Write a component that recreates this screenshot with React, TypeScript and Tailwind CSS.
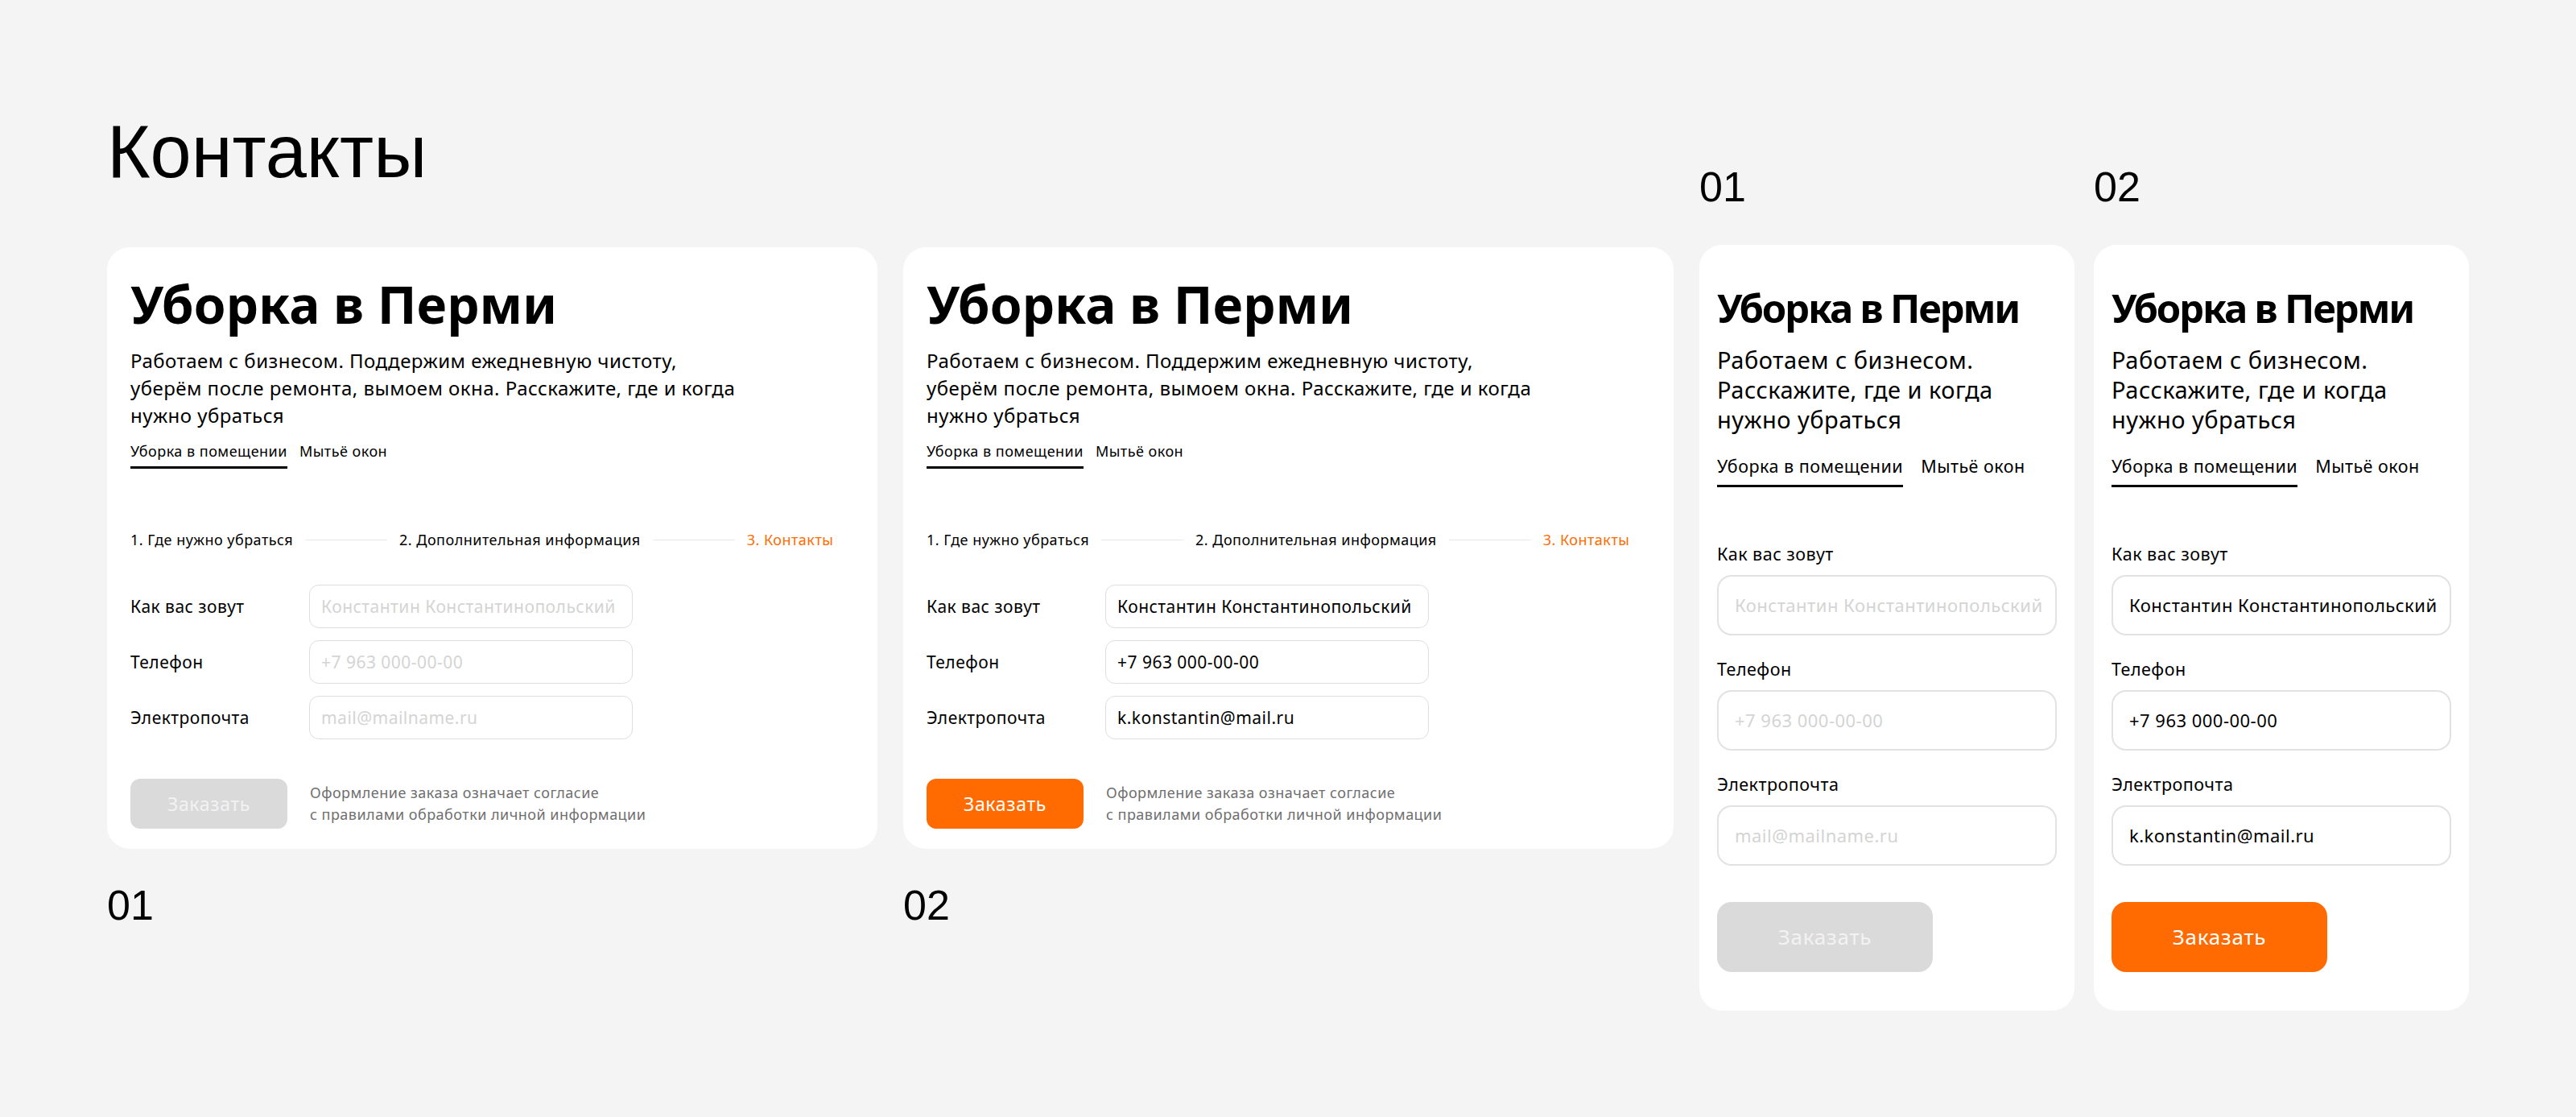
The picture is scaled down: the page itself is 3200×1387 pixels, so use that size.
const sans = "font-['Noto_Sans',sans-serif]";

interface VariantProps {
  filled: boolean;
}

const fields = [
  { label: "Как вас зовут", value: "Константин Константинопольский" },
  { label: "Телефон", value: "+7 963 000-00-00" },
  { label: "Электропочта", value: "k.konstantin@mail.ru", placeholder: "mail@mailname.ru" },
];

const DesktopCard = ({ filled }: VariantProps) => {
  return (
    <div className={`w-[957px] h-[747px] rounded-[28px] bg-white px-[29px] pt-[36px] text-black ${sans}`}>
      <h2 className="text-[64px] leading-[1.1] font-bold">Уборка в Перми</h2>
      <div className="tracking-[0.03em]">
        <p className="mt-[18px] text-[24px] leading-[34px]">
          Работаем с бизнесом. Поддержим ежедневную чистоту,
          <br />
          уберём после ремонта, вымоем окна. Расскажите, где и когда
          <br />
          нужно убраться
        </p>
        <div className="mt-[15px] flex items-start gap-[15px] text-[18px] leading-[24px]">
          <span className="border-b-[3px] border-black pb-[7px]">Уборка в помещении</span>
          <span>Мытьё окон</span>
        </div>

        <div className="mt-[76px] flex items-center gap-[15px] text-[18px] leading-[24px]">
          <span>1. Где нужно убраться</span>
          <span className="h-px w-[102px] bg-[#e8e8e8]" />
          <span>2. Дополнительная информация</span>
          <span className="h-px w-[102px] bg-[#e8e8e8]" />
          <span className="text-[#ff6b00]">3. Контакты</span>
        </div>

        <div className="mt-[44px] flex flex-col gap-[15px]">
          {fields.map((f) => (
            <div key={f.label} className="flex items-center">
              <span className="w-[222px] text-[21px] leading-[28px]">{f.label}</span>
              <div
                className={`flex h-[54px] w-[402px] items-center overflow-hidden whitespace-nowrap rounded-[12px] border border-[#dedede] px-[14px] text-[21px] ${
                  filled ? "text-black" : "text-[#d4d4d4]"
                }`}
              >
                {filled ? f.value : f.placeholder ?? f.value}
              </div>
            </div>
          ))}
        </div>

        <div className="mt-[49px] flex items-center">
          <button
            className={`h-[62px] w-[195px] rounded-[12px] text-[23px] tracking-[0.03em] ${
              filled ? "bg-[#ff6b00] text-white" : "bg-[#dadada] text-[#f2f2f2]"
            }`}
          >
            Заказать
          </button>
          <p className="ml-[28px] text-[18px] leading-[27px] text-[#6f6f6f]">
            Оформление заказа означает согласие
            <br />с правилами обработки личной информации
          </p>
        </div>
      </div>
    </div>
  );
};

const MobileCard = ({ filled }: VariantProps) => {
  return (
    <div className={`w-[466px] rounded-[28px] bg-white px-[22px] pt-[52px] pb-[48px] text-black ${sans}`}>
      <h2 className="text-[49px] leading-[1.1] font-bold tracking-[-0.045em]">Уборка в Перми</h2>
      <div className="tracking-[0.03em]">
        <p className="mt-[18px] text-[29px] leading-[37px]">
          Работаем с бизнесом.
          <br />
          Расскажите, где и когда
          <br />
          нужно убраться
        </p>
        <div className="mt-[26px] flex items-start gap-[22px] text-[21.5px] leading-[28px]">
          <span className="border-b-[3px] border-black pb-[9px]">Уборка в помещении</span>
          <span>Мытьё окон</span>
        </div>

        <div className="mt-[69px] flex flex-col gap-[28px]">
          {fields.map((f) => (
            <div key={f.label}>
              <div className="text-[21.5px] leading-[28px]">{f.label}</div>
              <div
                className={`mt-[12px] flex h-[75px] w-full items-center overflow-hidden whitespace-nowrap rounded-[18px] border-2 border-[#e2e2e2] px-[20px] text-[22px] ${
                  filled ? "text-black" : "text-[#d4d4d4]"
                }`}
              >
                {filled ? f.value : f.placeholder ?? f.value}
              </div>
            </div>
          ))}
        </div>

        <button
          className={`mt-[45px] h-[87px] w-[268px] rounded-[18px] text-[26px] tracking-[0.03em] ${
            filled ? "bg-[#ff6b00] text-white" : "bg-[#dadada] text-[#f2f2f2]"
          }`}
        >
          Заказать
        </button>
      </div>
    </div>
  );
};

const Num = ({ children }: { children: string }) => (
  <div className="font-['Liberation_Sans',Arial,sans-serif] text-[52px] leading-none text-black">{children}</div>
);

export default function App() {
  return (
    <div className="flex min-h-screen w-[3200px] bg-[#f4f4f4] pl-[133px]">
      <div className="pt-[142px]">
        <h1 className="font-['Liberation_Sans',Arial,sans-serif] text-[92px] leading-none text-black">Контакты</h1>
        <div className="mt-[73px] flex gap-[32px]">
          <div>
            <DesktopCard filled={false} />
            <div className="mt-[44px]">
              <Num>01</Num>
            </div>
          </div>
          <div>
            <DesktopCard filled />
            <div className="mt-[44px]">
              <Num>02</Num>
            </div>
          </div>
        </div>
      </div>

      <div className="ml-[32px] flex gap-[24px] pt-[206px]">
        <div>
          <Num>01</Num>
          <div className="mt-[46px]">
            <MobileCard filled={false} />
          </div>
        </div>
        <div>
          <Num>02</Num>
          <div className="mt-[46px]">
            <MobileCard filled />
          </div>
        </div>
      </div>
    </div>
  );
}
